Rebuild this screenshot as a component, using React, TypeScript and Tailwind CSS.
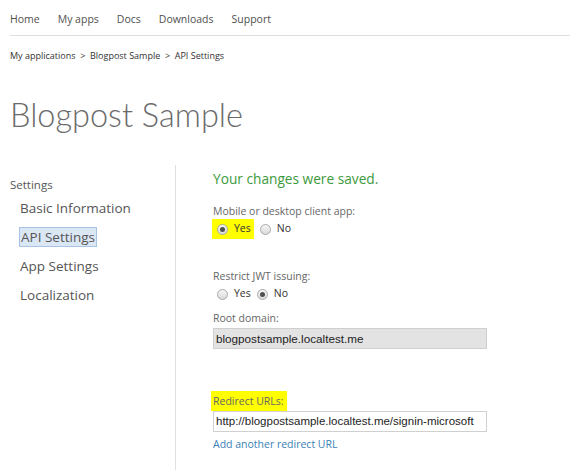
import React from 'react';

const Radio: React.FC<{ checked?: boolean }> = ({ checked }) => (
  <span className="inline-flex items-center justify-center w-[11px] h-[11px] rounded-full border border-[#a9a9a9] bg-gradient-to-b from-[#f6f6f6] to-[#dadada]">
    {checked && <span className="w-[5px] h-[5px] rounded-full bg-[#505050]" />}
  </span>
);

const App: React.FC = () => {
  const navItems = ['Home', 'My apps', 'Docs', 'Downloads', 'Support'];
  const sideItems = ['Basic Information', 'API Settings', 'App Settings', 'Localization'];

  return (
    <div className="w-[570px] h-[470px] overflow-hidden bg-white text-[#555] font-['Open_Sans',sans-serif]">
      <div className="ml-[10px] border-b border-[#dedede] h-[36px] pt-[5px] flex items-center gap-[18px] text-[10.5px] text-[#505050]">
        {navItems.map((n) => (
          <span key={n}>{n}</span>
        ))}
      </div>

      <div className="ml-[10px] mt-[13px] leading-[14px] text-[9px] text-[#333]">
        My applications&nbsp; &gt;&nbsp; Blogpost Sample&nbsp; &gt;&nbsp; API Settings
      </div>

      <h1 className="ml-[10px] mt-[35px] text-[32.5px] font-light text-[#6a6a6a] leading-[33px] font-['Lato',sans-serif]">
        Blogpost Sample
      </h1>

      <div className="flex mt-[34px]">
        <div className="w-[175px] pl-[10px] pt-[12px]">
          <div className="text-[11.5px] leading-[16px] text-[#555]">Settings</div>
          <div className="mt-[5px] flex flex-col items-start gap-[9px] text-[13.5px] text-[#555]">
            {sideItems.map((s) => (
              <span
                key={s}
                className={
                  s === 'API Settings'
                    ? 'ml-[9px] px-[1px] leading-[18px] bg-[#dbe7f5] border border-[#a7c4e6]'
                    : 'ml-[10px] leading-[20px]'
                }
              >
                {s}
              </span>
            ))}
          </div>
        </div>

        <div className="border-l border-[#e0e0e0] h-[310px] pl-[37px] pt-[4px]">
          <div className="text-[13.7px] leading-[20px] text-[#3c9a3c]">Your changes were saved.</div>

          <div className="mt-[14px] text-[10.5px] leading-[16px] text-[#666]">Mobile or desktop client app:</div>
          <div className="-ml-[1px] flex items-center h-[20px] text-[10.5px] text-[#333]">
            <span className="flex items-center h-[20px] gap-[6px] bg-[#ffff00] pl-[5px] pr-[3px]">
              <Radio checked />
              <span>Yes</span>
            </span>
            <span className="flex items-center gap-[6px] ml-[6px]">
              <Radio />
              <span>No</span>
            </span>
          </div>

          <div className="mt-[29px] text-[10.5px] leading-[16px] text-[#666]">Restrict JWT issuing:</div>
          <div className="mt-[2px] flex items-center h-[16px] text-[10.5px] text-[#333] pl-[4px]">
            <Radio />
            <span className="ml-[6px]">Yes</span>
            <span className="ml-[6px]">
              <Radio checked />
            </span>
            <span className="ml-[6px]">No</span>
          </div>

          <div className="mt-[8px] text-[10.5px] leading-[16px] text-[#666]">Root domain:</div>
          <div className="mt-[2px] w-[274px] h-[21px] bg-[#e3e3e3] border border-[#cfcfcf] flex items-center px-[2px] whitespace-nowrap text-[11.7px] text-[#222] font-['Liberation_Sans',sans-serif]">
            blogpostsample.localtest.me
          </div>

          <div className="mt-[42px] -ml-[2px] leading-none">
            <span className="inline-block bg-[#ffff00] pl-[2px] pr-[3px] text-[10.5px] text-[#666] leading-[20px]">
              Redirect URLs:
            </span>
          </div>
          <div className="w-[274px] h-[21px] bg-white border border-[#d0d0d0] flex items-center px-[2px] whitespace-nowrap text-[11.5px] text-[#222] font-['Liberation_Sans',sans-serif]">
            http://blogpostsample.localtest.me/signin-microsoft
          </div>
          <div className="mt-[4px] text-[10.5px] leading-[16px] text-[#3a7fb6]">Add another redirect URL</div>
        </div>
      </div>
    </div>
  );
};

export default App;
